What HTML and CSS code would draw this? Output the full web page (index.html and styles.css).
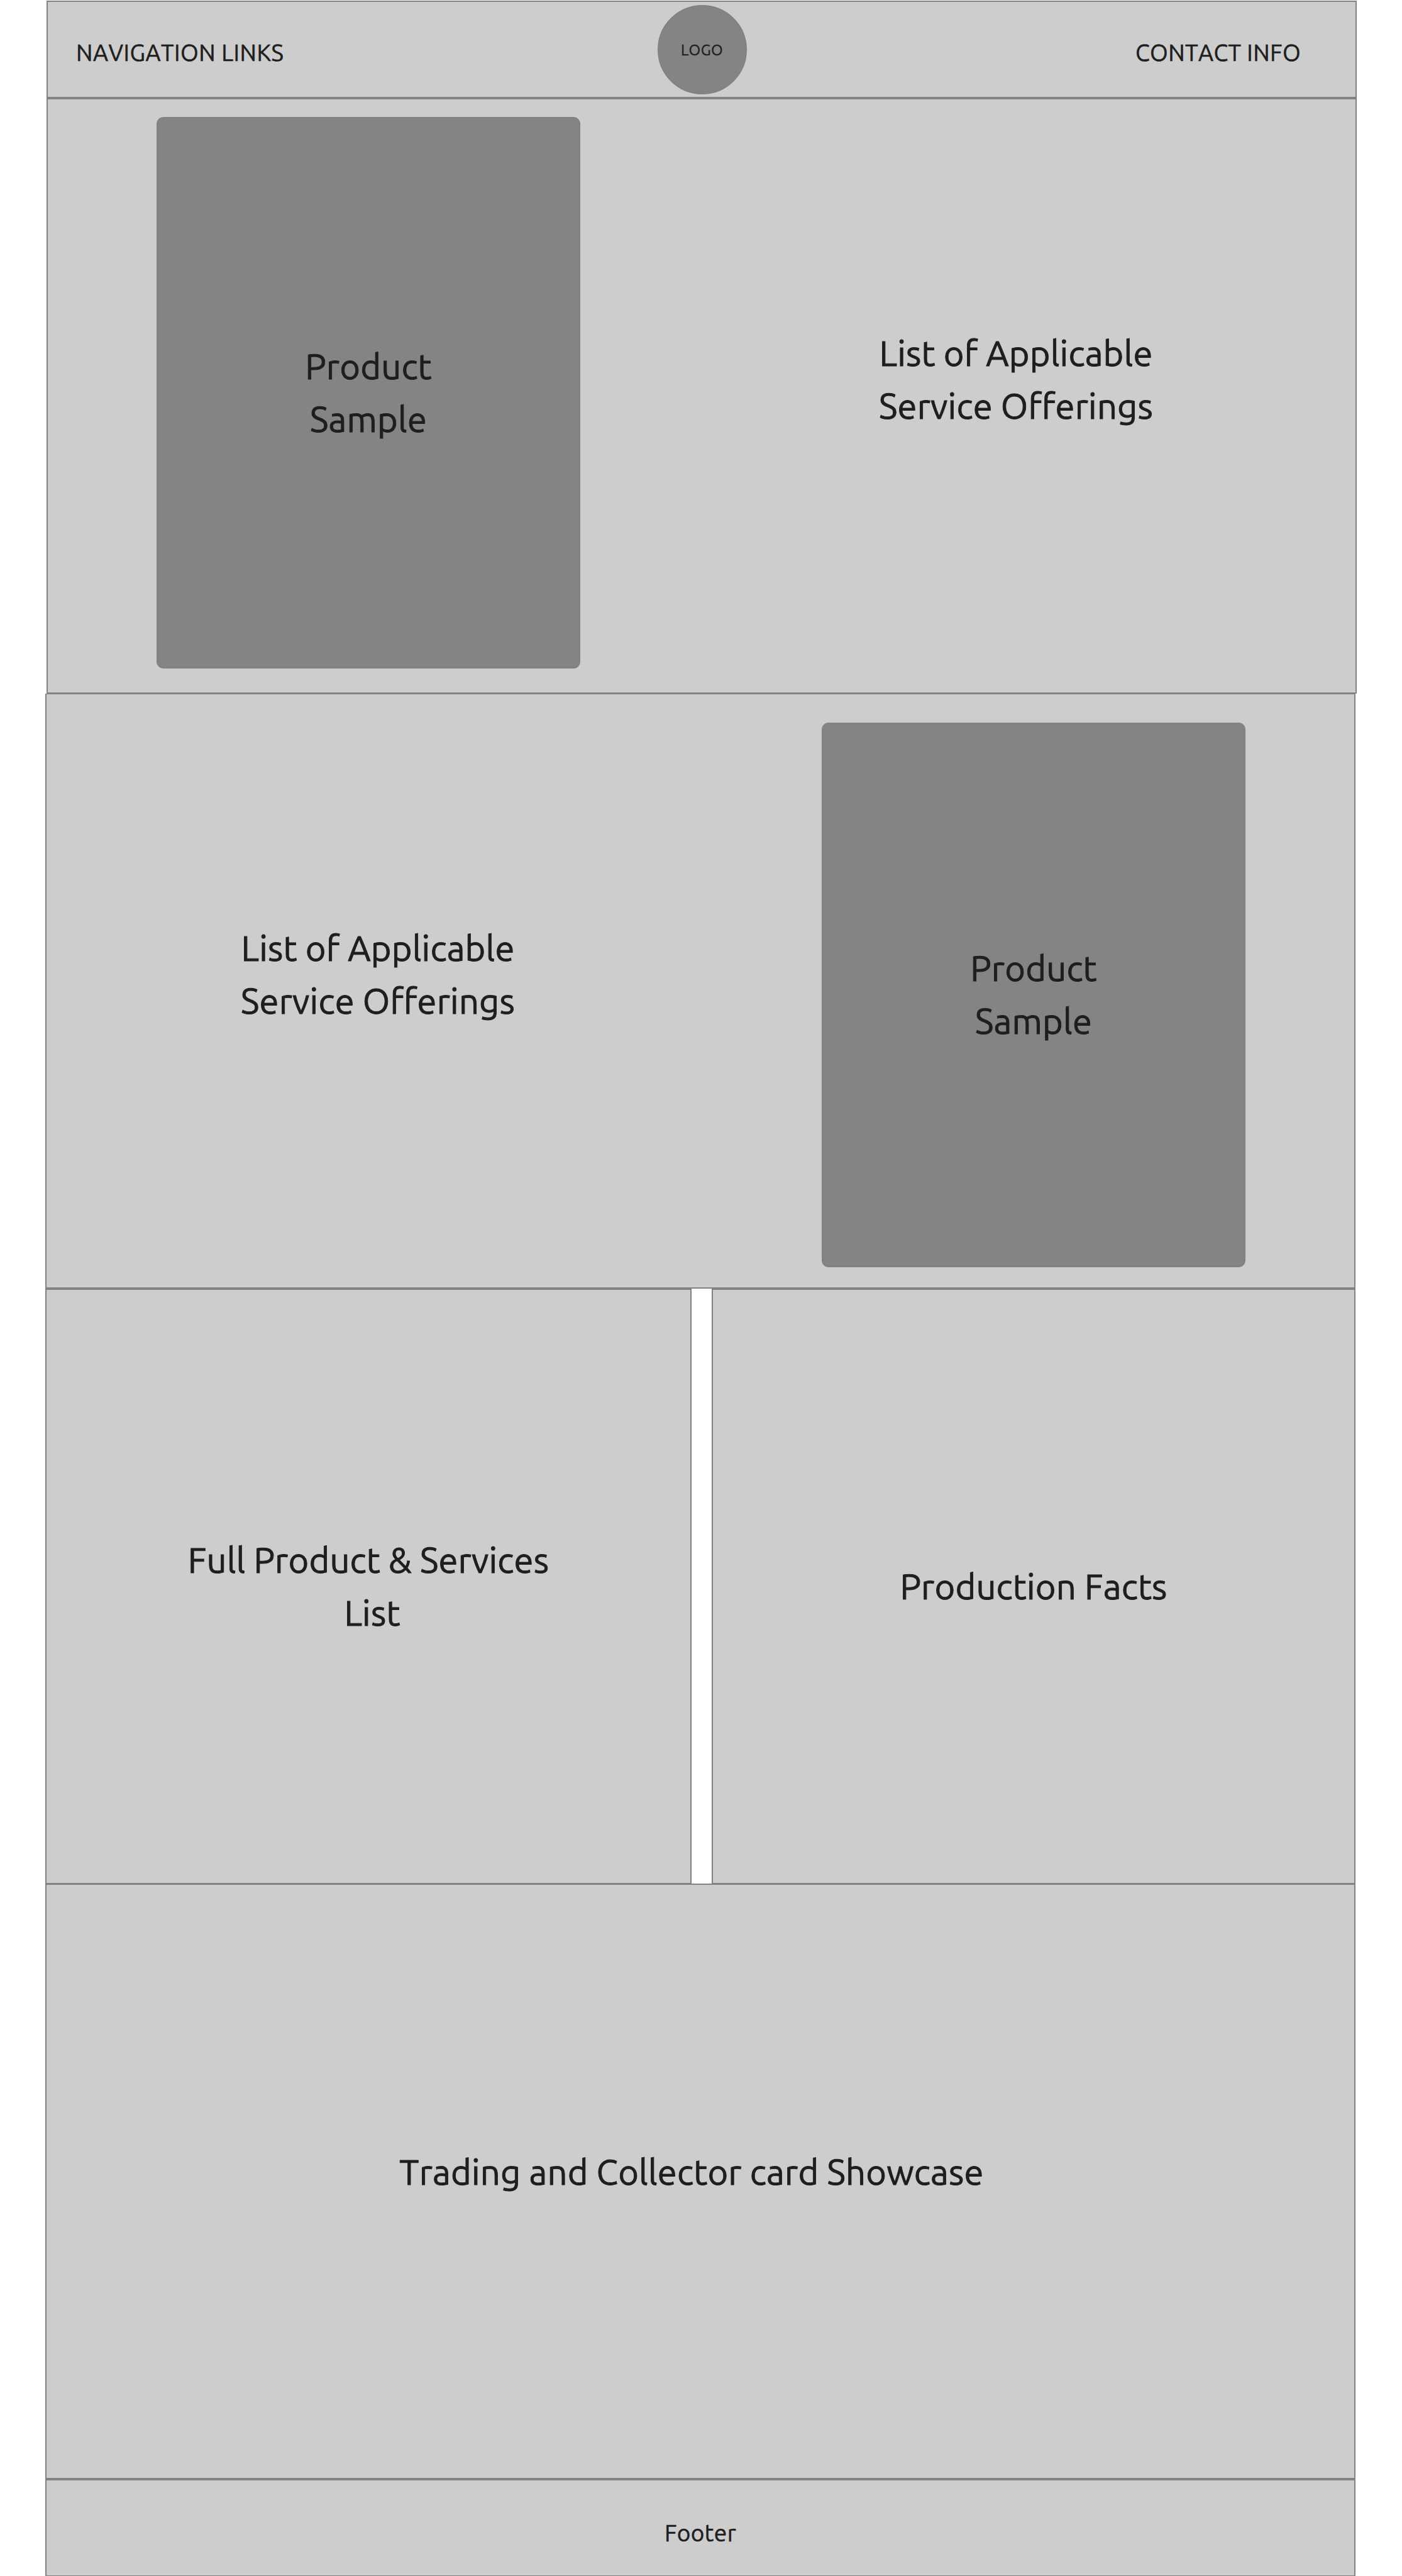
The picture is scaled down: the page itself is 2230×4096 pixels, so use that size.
FILE: index.html
```html
<!DOCTYPE html>
<html lang="en">
<head>
<meta charset="utf-8">
<title>Wireframe</title>
<link rel="stylesheet" href="styles.css">
</head>
<body>
<div class="page">
  <header class="panel header">
    <nav class="nav">NAVIGATION LINKS</nav>
    <div class="logo">LOGO</div>
    <div class="contact">CONTACT INFO</div>
  </header>
  <main>
    <section class="panel feature">
      <div class="sample">Product<br>Sample</div>
      <h2 class="offerings">List of Applicable<br>Service Offerings</h2>
    </section>
    <section class="panel feature feature-reverse">
      <h2 class="offerings">List of Applicable<br>Service Offerings</h2>
      <div class="sample">Product<br>Sample</div>
    </section>
    <div class="columns">
      <section class="panel column services">
        <h2><span class="first-line">Full Product &amp; Services</span><br>List</h2>
      </section>
      <section class="panel column">
        <h2>Production Facts</h2>
      </section>
    </div>
    <section class="panel showcase">
      <h2>Trading and Collector card Showcase</h2>
    </section>
  </main>
  <footer class="panel footer">Footer</footer>
</div>
</body>
</html>
```
FILE: styles.css
```css
* {
  box-sizing: border-box;
}

html,
body {
  margin: 0;
  height: 4096px;
  overflow: hidden;
  background: #fff;
}

body {
  color: #1e1e1e;
  font-family: Ubuntu, "Noto Sans", sans-serif;
  font-kerning: none;
  -webkit-text-stroke: 0.6px #1e1e1e;
}

.page {
  width: 2230px;
  padding: 1px 0 0 72px;
}

.panel {
  width: 2084px;
  border: 2px solid #828282;
  background: #cdcdcd;
}

h2,
.sample {
  margin: 0;
  font-size: 56px;
  font-weight: 400;
  line-height: 83.6px;
  letter-spacing: 0.2px;
  text-align: center;
  -webkit-text-stroke-width: 0.9px;
}

/* Header */

.header {
  display: grid;
  grid-template-columns: 1fr auto 1fr;
  align-items: start;
  height: 155px;
  margin-left: 2px;
}

.nav,
.contact {
  margin-top: 60px;
  font-size: 37px;
  line-height: 42px;
  letter-spacing: 0.5px;
}

.nav {
  padding-left: 45px;
}

.contact {
  padding-right: 87px;
  letter-spacing: 0.4px;
  text-align: right;
}

.logo {
  display: flex;
  align-items: center;
  justify-content: center;
  width: 142px;
  height: 142px;
  margin: 5px 0 0 1px;
  border: 2px solid #828282;
  border-radius: 50%;
  background: #848484;
  font-size: 24px;
  letter-spacing: 0.4px;
  -webkit-text-stroke-width: 0.4px;
}

/* Feature rows */

.feature {
  display: flex;
  align-items: flex-start;
  height: 947px;
  margin-left: 2px;
}

.sample {
  display: flex;
  align-items: center;
  justify-content: center;
  width: 674px;
  height: 877px;
  margin: 28px 0 0 173px;
  border: 3px solid #828282;
  border-radius: 11px;
  background: #848484;
}

.offerings {
  width: 500px;
  margin: 362px 0 0 443px;
}

.feature-reverse {
  height: 946px;
  margin-left: 0;
  border-top-width: 1px;
}

.feature-reverse .offerings {
  margin-left: 277px;
}

.feature-reverse .sample {
  height: 866px;
  margin: 45px 0 0 456px;
}

/* Two-column row */

.columns {
  display: grid;
  grid-template-columns: 1028px 1fr;
  gap: 32px;
  width: 2084px;
  height: 946px;
}

.column {
  display: flex;
  align-items: center;
  justify-content: center;
  width: auto;
  border-bottom-width: 1px;
}

.services {
  padding-left: 12px;
}

.first-line {
  padding-right: 12px;
}

/* Showcase and footer */

.showcase {
  display: flex;
  align-items: center;
  justify-content: center;
  height: 947px;
  padding: 0 28px 30px 0;
}

.footer {
  display: flex;
  align-items: center;
  justify-content: center;
  height: 154px;
  padding-top: 16px;
  border-bottom-width: 1px;
  font-size: 37px;
  letter-spacing: 0.4px;
}
```
